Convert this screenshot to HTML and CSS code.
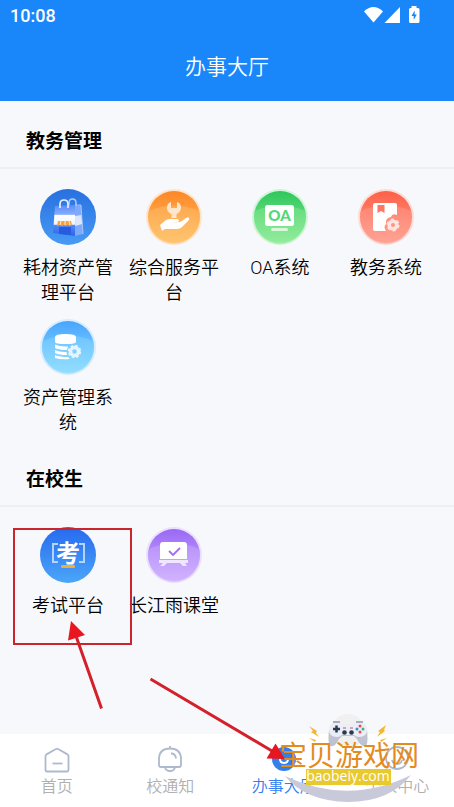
FILE: index.html
```
<!DOCTYPE html>
<html lang="zh-CN">
<head>
    <meta charset="UTF-8">
    <meta name="viewport" content="width=device-width, initial-scale=1.0">
    <title>办事大厅</title>
    <link rel="stylesheet" href="styles.css">
</head>
<body>
    <header class="header">
        <div class="status-bar">
            <span class="time">10:08</span>
            <svg class="status-icons" width="56" height="18" viewBox="0 0 56 18" fill="#fff">
                <path d="M0 5.5C5.5-.6 13.500-.6 19 5.500L9.500 16.500z"/>
                <path d="M20.500 17L36 1v16z"/>
                <path d="M47.500 0h5v2h1.500a1.500 1.500 0 0 1 1.500 1.500v12a1.500 1.500 0 0 1-1.500 1.500h-7.500a1.500 1.500 0 0 1-1.500-1.500v-12A1.500 1.500 0 0 1 46.500 2h1z"/>
                <path d="M50.700 4.500L47.500 10h2.200v4l3.100-5.500h-2.100z" fill="#1987fa"/>
            </svg>
        </div>
        <h1>办事大厅</h1>
    </header>

    <main>
        <section>
            <h2>教务管理</h2>
            <div class="app-grid">
                <a class="app" href="#">
                    <svg class="app-icon" viewBox="0 0 56 56">
                        <defs>
                            <linearGradient id="blueBg" x1="0" y1="0" x2="0" y2="1">
                                <stop offset="0" stop-color="#2870df"/>
                                <stop offset="1" stop-color="#479bf5"/>
                            </linearGradient>
                            <linearGradient id="bagBg" x1="0" y1="0" x2="0" y2="1">
                                <stop offset="0" stop-color="#5a8cfa"/>
                                <stop offset=".3" stop-color="#86adff"/>
                                <stop offset=".34" stop-color="#fff"/>
                                <stop offset=".62" stop-color="#eef3ff"/>
                                <stop offset=".66" stop-color="#5287f7"/>
                                <stop offset="1" stop-color="#2e63ea"/>
                            </linearGradient>
                        </defs>
                        <circle cx="28" cy="28" r="28" fill="url(#blueBg)"/>
                        <path d="M29 19v-5q0-4 3.500-4t3.500 4v5" fill="none" stroke="#a9cbff" stroke-width="1.500"/>
                        <path d="M34 17l7-1 2 29-8 2z" fill="#7fa9fb"/>
                        <path d="M35 27l6.500-1 .7 9-7 2z" fill="#dce7ff"/>
                        <path d="M15 17l20-1v31l-22-3z" fill="url(#bagBg)"/>
                        <path d="M35 16l6 0 2 29" fill="none" stroke="#b7d1ff" stroke-width=".8"/>
                        <path d="M20 19v-4q0-4 4-4t4 4v4" fill="none" stroke="#e4efff" stroke-width="1.700"/>
                        <path d="M18 32h13l1 4-2 1-2-1-2 1-2-1-2 1-2-1-3 1z" fill="#f7a13c"/>
                        <path d="M21 32l-1 4M25 32v4M29 32l1 4" stroke="#fff0d2" stroke-width="1"/>
                        <path d="M19 38h12v8l-12-1z" fill="#285adf"/>
                    </svg>
                    <span>耗材资产管理平台</span>
                </a>
                <a class="app" href="#">
                    <svg class="app-icon" viewBox="0 0 56 56">
                        <defs>
                            <linearGradient id="orangeBg" x1="0" y1="0" x2="0" y2="1">
                                <stop offset="0" stop-color="#fd8725"/>
                                <stop offset="1" stop-color="#ffc571"/>
                            </linearGradient>
                        </defs>
                        <circle cx="28" cy="28" r="28" fill="#fde5cc"/>
                        <circle cx="28" cy="28" r="26" fill="url(#orangeBg)"/>
                        <path d="M3 22Q28 11 53 22A26 26 0 1 1 3 22z" fill="#ffc26f" opacity=".4"/>
                        <path d="M25 13v6h6v-6c3 1 4 3 4 6s-2 5-4.500 6v4h-5v-4C23 24 21 22 21 19s1-5 4-6z" fill="#ffe6cb"/>
                        <path d="M14 36l6-5q2-1 4-1h7q2 0 2 1.500t-2 1.500h-4q6 1 9-1l4-3q2-1.500 3 0t-1 3l-6 6q-2 2-5 2H19l-3 2z" fill="#fff"/>
                    </svg>
                    <span>综合服务平台</span>
                </a>
                <a class="app" href="#">
                    <svg class="app-icon" viewBox="0 0 56 56">
                        <defs>
                            <linearGradient id="greenBg" x1="0" y1="0" x2="0" y2="1">
                                <stop offset="0" stop-color="#2ec75b"/>
                                <stop offset="1" stop-color="#94ec9d"/>
                            </linearGradient>
                        </defs>
                        <circle cx="28" cy="28" r="28" fill="#cff4d7"/>
                        <circle cx="28" cy="28" r="26" fill="url(#greenBg)"/>
                        <path d="M3 22Q28 11 53 22A26 26 0 1 1 3 22z" fill="#8eeb99" opacity=".4"/>
                        <rect x="13" y="16" width="29" height="21" rx="2.500" fill="#fff"/>
                        <rect x="19" y="39" width="17" height="3" rx="1.500" fill="#d8f8dc"/>
                        <text x="27.500" y="32" class="oa-text">OA</text>
                    </svg>
                    <span>OA系统</span>
                </a>
                <a class="app" href="#">
                    <svg class="app-icon" viewBox="0 0 56 56">
                        <defs>
                            <linearGradient id="redBg" x1="0" y1="0" x2="0" y2="1">
                                <stop offset="0" stop-color="#fd6048"/>
                                <stop offset="1" stop-color="#ffa293"/>
                            </linearGradient>
                        </defs>
                        <circle cx="28" cy="28" r="28" fill="#fddcd7"/>
                        <circle cx="28" cy="28" r="26" fill="url(#redBg)"/>
                        <path d="M3 22Q28 11 53 22A26 26 0 1 1 3 22z" fill="#ffa293" opacity=".4"/>
                        <path d="M17 14h20q2 0 2 2v10q-5-2-6 2-6 1-5 7-3 3 0 7H17q-2 0-2-2V16q0-2 2-2z" fill="#fff"/>
                        <path d="M19.500 16h7v8l-3.500-2-3.500 2z" fill="#fc7765"/>
                        <circle cx="35" cy="36" r="3.800" fill="none" stroke="#ffe4df" stroke-width="3.500"/>
                        <circle cx="35" cy="36" r="5.500" fill="none" stroke="#ffe4df" stroke-width="2" stroke-dasharray="3 2.760"/>
                    </svg>
                    <span>教务系统</span>
                </a>
                <a class="app" href="#">
                    <svg class="app-icon" viewBox="0 0 56 56">
                        <defs>
                            <linearGradient id="skyBg" x1="0" y1="0" x2="0" y2="1">
                                <stop offset="0" stop-color="#47a5fe"/>
                                <stop offset="1" stop-color="#94dfff"/>
                            </linearGradient>
                        </defs>
                        <circle cx="28" cy="28" r="28" fill="#d8edff"/>
                        <circle cx="28" cy="28" r="26" fill="url(#skyBg)"/>
                        <path d="M3 22Q28 11 53 22A26 26 0 1 1 3 22z" fill="#8fdcff" opacity=".4"/>
                        <path d="M15 18q0-3 10.500-3T36 18v5q0 2-10.500 2T15 23z" fill="#fff"/>
                        <path d="M15 25.500q5 2.500 13 2l-1 3.500q-8 0-12-2zM15 31q5 2.500 11.500 2l.5 3q-8 0-12-2zM15 36q5 2 13 2l2 2q-9 1-15-1z" fill="#fff"/>
                        <circle cx="34.500" cy="32.500" r="4" fill="none" stroke="#e2f5ff" stroke-width="3.500"/>
                        <circle cx="34.500" cy="32.500" r="5.500" fill="none" stroke="#e2f5ff" stroke-width="2.500" stroke-dasharray="2.500 1.820"/>
                    </svg>
                    <span>资产管理系统</span>
                </a>
            </div>
        </section>

        <section>
            <h2>在校生</h2>
            <div class="app-grid">
                <a class="app" href="#">
                    <svg class="app-icon" viewBox="0 0 56 56">
                        <defs>
                            <linearGradient id="examBg" x1="0" y1="0" x2="0" y2="1">
                                <stop offset="0" stop-color="#276aef"/>
                                <stop offset="1" stop-color="#4ba6f8"/>
                            </linearGradient>
                        </defs>
                        <circle cx="28" cy="28" r="28" fill="url(#examBg)"/>
                        <path d="M18 17h-5v18h5M39 17h5v18h-5" fill="none" stroke="#b2d5ff" stroke-width="2"/>
                        <text x="28" y="35" class="exam-text">考</text>
                        <rect x="21" y="38" width="14" height="3" rx="1" fill="#efae35"/>
                    </svg>
                    <span>考试平台</span>
                </a>
                <a class="app" href="#">
                    <svg class="app-icon" viewBox="0 0 56 56">
                        <defs>
                            <linearGradient id="purpleBg" x1="0" y1="0" x2="0" y2="1">
                                <stop offset="0" stop-color="#9968f5"/>
                                <stop offset="1" stop-color="#d1b4ff"/>
                            </linearGradient>
                        </defs>
                        <circle cx="28" cy="28" r="28" fill="#eadfff"/>
                        <circle cx="28" cy="28" r="26" fill="url(#purpleBg)"/>
                        <path d="M3 22Q28 11 53 22A26 26 0 1 1 3 22z" fill="#cfb1ff" opacity=".4"/>
                        <path d="M17 15h21q3 0 3 3v14H14V18q0-3 3-3z" fill="#fff"/>
                        <path d="M13 33h29v3h-3l2 3h-4l-3-3H21l-3 3h-4l3-3h-4z" fill="#f0e6ff"/>
                        <path d="M23 24l4 4 7-7" fill="none" stroke="#a36df0" stroke-width="1.800"/>
                    </svg>
                    <span class="nowrap">长江雨课堂</span>
                </a>
            </div>
        </section>
    </main>

    <nav class="tab-bar">
        <a class="tab" href="#">
            <svg width="28" height="28" viewBox="0 0 28 28" fill="none" stroke="#aeb9cd" stroke-width="1.800">
                <path d="M2.500 10q0-1 1-1.600l9.500-5.400q1-.6 2 0l9.500 5.400q1 .6 1 1.600v14q0 1.500-1.500 1.500H4q-1.500 0-1.500-1.500z"/>
                <path d="M9.500 17.500h10"/>
            </svg>
            首页
        </a>
        <a class="tab" href="#">
            <svg width="28" height="28" viewBox="0 0 28 28" fill="none" stroke="#aeb9cd" stroke-width="1.800">
                <path d="M14 0v2M3 19V12.500Q3.500 2.500 14 2.500T25 12.500V19q0 2-2 2H5q-2 0-2-2zM9 21.500q1 3.500 5 3.500t5-3.500M15 7.500q4.500 0 5 5"/>
            </svg>
            校通知
        </a>
        <a class="tab active" href="#">
            <svg width="28" height="28" viewBox="0 0 28 28">
                <circle cx="14" cy="13" r="12" fill="#347fee"/>
                <path d="M10 13q0 4 4 4t4-4" fill="none" stroke="#fff" stroke-width="2"/>
            </svg>
            办事大厅
        </a>
        <a class="tab" href="#">
            <svg width="28" height="28" viewBox="0 0 28 28" fill="none" stroke="#aeb9cd" stroke-width="1.800">
                <circle cx="14" cy="12" r="11"/>
                <path d="M9 14q1 4 5 4t5-4"/>
            </svg>
            个人中心
        </a>
    </nav>

    <!-- guide marks and site logo on top of the page -->
    <svg class="overlay" viewBox="0 0 454 807">
        <rect x="14" y="529" width="117" height="115" fill="none" stroke="#c9252d" stroke-width="2"/>
        <path d="M101.500 708.500L76 636M150.500 679L272 751" stroke="#d3202a" stroke-width="3"/>
        <path d="M71 621l-3 19.500 17-5.500zM285 759l-18.500-.5 9-15z" fill="#ea161f"/>

        <path d="M285 776Q348 806 411 775Q390 802 348 802Q305 801 285 776z" fill="#c8cad9"/>
        <circle cx="348" cy="731" r="17" fill="#f0f0f0"/>
        <path d="M329 730q-1 9 0 14 1 3 4 2 3-1 6-7l3-3h12l3 3q3 6 6 7 3 1 4-2 1-5 0-14z" fill="#bfc2d1"/>
        <path d="M329 730q0-8 8-8 3 0 5 2h12q2-2 5-2 8 0 8 8 0 7-8 7-3 0-5-2h-12q-2 2-5 2-8 0-8-7z" fill="#eceef5"/>
        <path d="M333 722h7M356 722h7" stroke="#9096ac" stroke-width="1.500"/>
        <path d="M333 729h7M336.500 725.500v7" stroke="#263b50" stroke-width="2.500"/>
        <g fill="#263b50">
            <circle cx="344.500" cy="732.500" r="2.300"/>
            <circle cx="351.500" cy="732.500" r="2.300"/>
        </g>
        <path d="M343 728h3M350 728h3" stroke="#d84c65" stroke-width="1"/>
        <circle cx="360" cy="726" r="1.500" fill="#e74b5b"/>
        <circle cx="360" cy="732" r="1.500" fill="#e74b5b"/>
        <circle cx="357" cy="729" r="1.500" fill="#3b90c5"/>
        <circle cx="363" cy="729" r="1.500" fill="#39b48d"/>
        <path d="M309 726l8 5-1 2 3 4-8-5 2-1zM386 725l-8 6 2 1-3 5 8-6-1-1zM309 738l7 2-1 2zM387 738l-7 2 1 2z" fill="#f3b72c"/>
        <text x="349" y="766" class="logo-name">宝贝游戏网</text>
        <rect x="306" y="769" width="85" height="16" fill="#e8c92e"/>
        <text x="348" y="781" class="logo-url">baobeiy.com</text>
    </svg>
</body>
</html>
```
FILE: styles.css
```
* {
    box-sizing: border-box;
}

body {
    font-family: Roboto, "Noto Sans CJK SC", sans-serif;
    margin: 0;
    min-height: 100vh;
    display: flex;
    flex-direction: column;
    position: relative;
    background: #f7f8fc;
    color: #000;
}

a {
    color: inherit;
    text-decoration: none;
}

.header {
    background: #1987fa;
    color: #fff;
    padding-bottom: 18px;
}

.status-bar {
    display: flex;
    justify-content: space-between;
    align-items: center;
    height: 32px;
    padding: 0 34px 0 10px;
}

.time {
    font-size: 18px;
    font-weight: 500;
    line-height: 32px;
}

.status-icons {
    display: block;
    margin-bottom: 2px;
}

h1 {
    margin: 0;
    padding-top: 19px;
    font-size: 21px;
    font-weight: 350;
    line-height: 32px;
    text-align: center;
}

main {
    flex: 1;
}

h2 {
    margin: 0;
    padding: 26px 26px 10px;
    border-bottom: 2px solid #eeeff2;
    font-size: 19px;
    font-weight: 700;
    line-height: 30px;
}

.app-grid {
    display: grid;
    grid-template-columns: repeat(4, 1fr);
    row-gap: 14px;
    padding: 20px 15px 4px;
}

.app {
    display: flex;
    flex-direction: column;
    align-items: center;
    gap: 10px;
    padding: 0 8px;
    font-size: 18px;
    font-weight: 350;
    line-height: 25px;
    text-align: center;
}

.app-icon {
    width: 56px;
    height: 56px;
}

.nowrap {
    white-space: nowrap;
}

.oa-text {
    font-family: Lato, sans-serif;
    font-size: 15px;
    font-weight: 900;
    text-anchor: middle;
    fill: #55d777;
}

.exam-text {
    font-size: 24px;
    font-weight: 700;
    text-anchor: middle;
    fill: #fff;
}

.tab-bar {
    display: grid;
    grid-template-columns: repeat(4, 1fr);
    height: 73px;
    padding-top: 12px;
    background: #fff;
}

.tab {
    display: flex;
    flex-direction: column;
    align-items: center;
    gap: 1px;
    color: #b0b0b0;
    font-size: 16px;
    font-weight: 350;
    line-height: 24px;
}

.tab.active {
    color: #347fee;
}

.overlay {
    position: absolute;
    left: 0;
    bottom: 0;
    width: 100%;
    pointer-events: none;
}

.logo-name {
    font-size: 28px;
    font-weight: 400;
    text-anchor: middle;
    fill: #e38b1d;
}

.logo-url {
    font-family: "Open Sans", sans-serif;
    font-size: 14px;
    font-weight: 500;
    text-anchor: middle;
    fill: #fff;
}
```
